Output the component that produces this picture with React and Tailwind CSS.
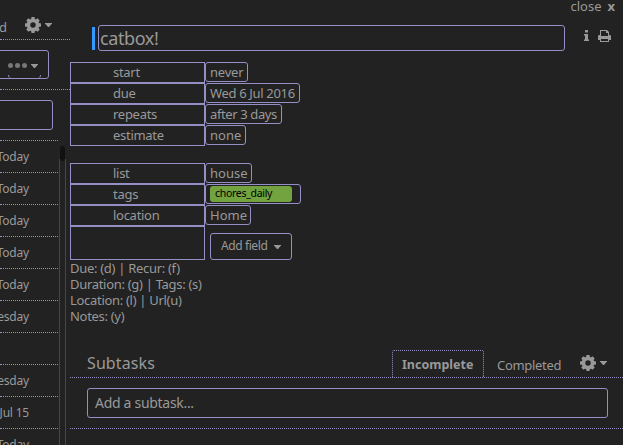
import React from 'react';

const FONT = 'font-["Noto_Sans",sans-serif]';

function Caret({ className = '' }) {
  return (
    <svg className={`block h-1 w-[7px] shrink-0 ${className}`} viewBox="0 0 7 4" fill="#999">
      <path d="M0 0h7v.6L4 4H3L0 .6z" />
    </svg>
  );
}

function Gear() {
  return (
    <svg className="block size-4 shrink-0" viewBox="-8 -8 16 16" fill="#999">
      {[0, 45, 90, 135].map((a) => (
        <path key={a} transform={`rotate(${a})`} d="M-2-5.400-1.500-8h3l.5 2.600zM-2 5.400-1.500 8h3l.5-2.600z" />
      ))}
      <circle r="4.5" fill="none" stroke="#999" strokeWidth="3.6" />
    </svg>
  );
}

function Printer() {
  return (
    <svg className="block h-3 w-[13px]" viewBox="0 0 13 12" fill="#999">
      <path fillRule="evenodd" d="M2 0h7l2 2v3h.7Q13 5 13 6.300V10h-2v2H2v-2H0V6.300Q0 5 1.300 5H2zM3 1v5h7V3H8V1zM3 9v2h7V9z" />
    </svg>
  );
}

function Info() {
  return (
    <svg className="block h-[11px] w-[5px]" viewBox="0 0 5 11" fill="#999">
      <path d="M1 0h3v2.500H1zM0 4h4v5.500h1V11H0V9.500h1v-4H0z" />
    </svg>
  );
}

function Field({ label, value, width, children }) {
  return (
    <div className="flex h-[21px]">
      <div className="w-[135px] border border-[#9490c6] pl-[42px] text-[13px] leading-[19px] tracking-[-0.28px]">{label}</div>
      <div className={`h-5 rounded-[3px] border border-[#9490c6] pl-1 text-[13px] leading-[19px] whitespace-nowrap ${width}`}>
        {children || value}
      </div>
    </div>
  );
}

const dates = ['Today', 'Today', 'Today', 'Today', 'Today', 'Wednesday', '', 'Wednesday', 'Fri Jul 15', 'Today'];

function TaskList() {
  return (
    <aside className="flex h-[445px] w-[70px] shrink-0 flex-col overflow-hidden">
      <div className="flex h-10 shrink-0 border-b border-dotted border-[#9490c6]">
        <span className="-ml-px w-[26px] pt-[17px] text-[13px] leading-5">d</span>
        <span className="mt-[17px] flex h-4 items-center gap-1"><Gear /><Caret /></span>
      </div>
      <div className="h-[50px] shrink-0 border-b border-dotted border-[#9490c6] pt-[10px]">
        <div className="-ml-1 flex h-[29px] w-[53px] flex-col rounded-[3px] border border-[#9490c6]">
          <div className="flex h-[24px] items-center gap-[2px] pt-[5px] pl-[11px]">
            <i className="size-[5px] rounded-full bg-[#777]" />
            <i className="size-[5px] rounded-full bg-[#777]" />
            <i className="size-[5px] rounded-full bg-[#777]" />
            <Caret className="ml-[2px]" />
          </div>
          <div className="ml-[11px] h-[3px] w-[33px] rounded-b-[3px] border-x border-[#9490c6]" />
        </div>
      </div>
      <div className="h-[50px] shrink-0 pt-[10px]">
        <div className="-ml-1 h-[30px] w-[57px] rounded-[3px] border border-[#9490c6]" />
      </div>
      <div className="flex shrink-0">
        <div className="w-[59px]">
          {dates.map((d, i) => (
            <div key={i} className="flex h-8 w-[58px] justify-end border-t border-dotted border-[#9490c6] pr-[29px] text-[12px] leading-8 tracking-[-0.2px] whitespace-nowrap">
              {d}
            </div>
          ))}
        </div>
        <div className="w-[7px] pt-[6px]">
          <div className="mx-px h-[15px] rounded-full bg-[#111]" />
          <div className="-mt-[2px] h-[300px] border-x border-[#46464e]" />
        </div>
      </div>
    </aside>
  );
}

export default function App() {
  return (
    <div className={`flex h-[445px] w-[623px] overflow-hidden bg-[#222] text-[#999] ${FONT}`}>
      <TaskList />
      <main className="flex w-[553px] flex-col">
        <div className="flex h-[25px] justify-end gap-[6px] pr-2 text-[13px] leading-[12px]">
          <span>close</span><b>x</b>
        </div>
        <div className="flex h-[37px] pl-[22px]">
          <div className="mt-[2px] mr-[3px] h-[23px] w-[3px] bg-[#3399ff]" />
          <div className="h-[26px] w-[467px] rounded-[3px] border border-[#9490c6] pl-px text-[18px] leading-[25px] tracking-[-0.4px]">catbox!</div>
          <div className="mt-[5px] ml-[19px] flex items-start gap-[9px]"><Info /><Printer /></div>
        </div>
        <Field label="start" value="never" width="w-[43px] tracking-[-0.2px]" />
        <Field label="due" value="Wed 6 Jul 2016" width="w-[95px] tracking-[-0.33px]" />
        <Field label="repeats" value="after 3 days" width="w-[77px] tracking-[-0.38px]" />
        <Field label="estimate" value="none" width="w-[41px]" />
        <div className="h-[17px]" />
        <Field label="list" value="house" width="w-[47px]" />
        <Field label="tags" width="w-[96px]">
          <div className="mt-px h-4 w-[82px] rounded-[3px] bg-[#72a33e] pl-[5px] text-[10.5px] leading-[15px] tracking-[-0.3px] text-black">chores_daily</div>
        </Field>
        <Field label="location" value="Home" width="w-[46px]" />
        <div className="flex h-[34px]">
          <div className="w-[135px] border border-[#9490c6]" />
          <div className="mt-[7px] ml-[5px] flex h-[27px] w-[82px] items-center rounded-[3px] border border-[#9490c6] pb-px pl-[10px] text-[12px] tracking-[-0.4px] whitespace-nowrap">
            Add field<Caret className="mt-px ml-[7px]" />
          </div>
        </div>
        <div className="h-[90px] text-[13px] leading-4 tracking-[-0.3px]">
          <div>Due: (d) | Recur: (f)</div>
          <div>Duration: (g) | Tags: (s)</div>
          <div>Location: (l) | Url(u)</div>
          <div>Notes: (y)</div>
        </div>
        <div className="flex h-7 border-b border-dotted border-[#9490c6] pl-[17px]">
          <h2 className="w-[305px] text-[16px] leading-[26px] tracking-[0.1px]">Subtasks</h2>
          <div className="w-[92px] rounded-t-[2px] border border-b-0 border-dotted border-[#9490c6] pl-[9px] text-[12.5px] leading-[27px] font-bold">Incomplete</div>
          <div className="w-[96px] pl-[13px] text-[13px] leading-[30px] tracking-[-0.3px]">Completed</div>
          <div className="mt-[5px] flex h-4 items-center gap-1"><Gear /><Caret /></div>
        </div>
        <div className="h-[51px] border-b border-dotted border-[#9490c6] pt-[10px] pl-[17px]">
          <div className="h-[30px] w-[521px] rounded-[3px] border border-[#9490c6] pl-[7px] text-[14px] leading-7 tracking-[-0.3px]">Add a subtask...</div>
        </div>
      </main>
    </div>
  );
}
